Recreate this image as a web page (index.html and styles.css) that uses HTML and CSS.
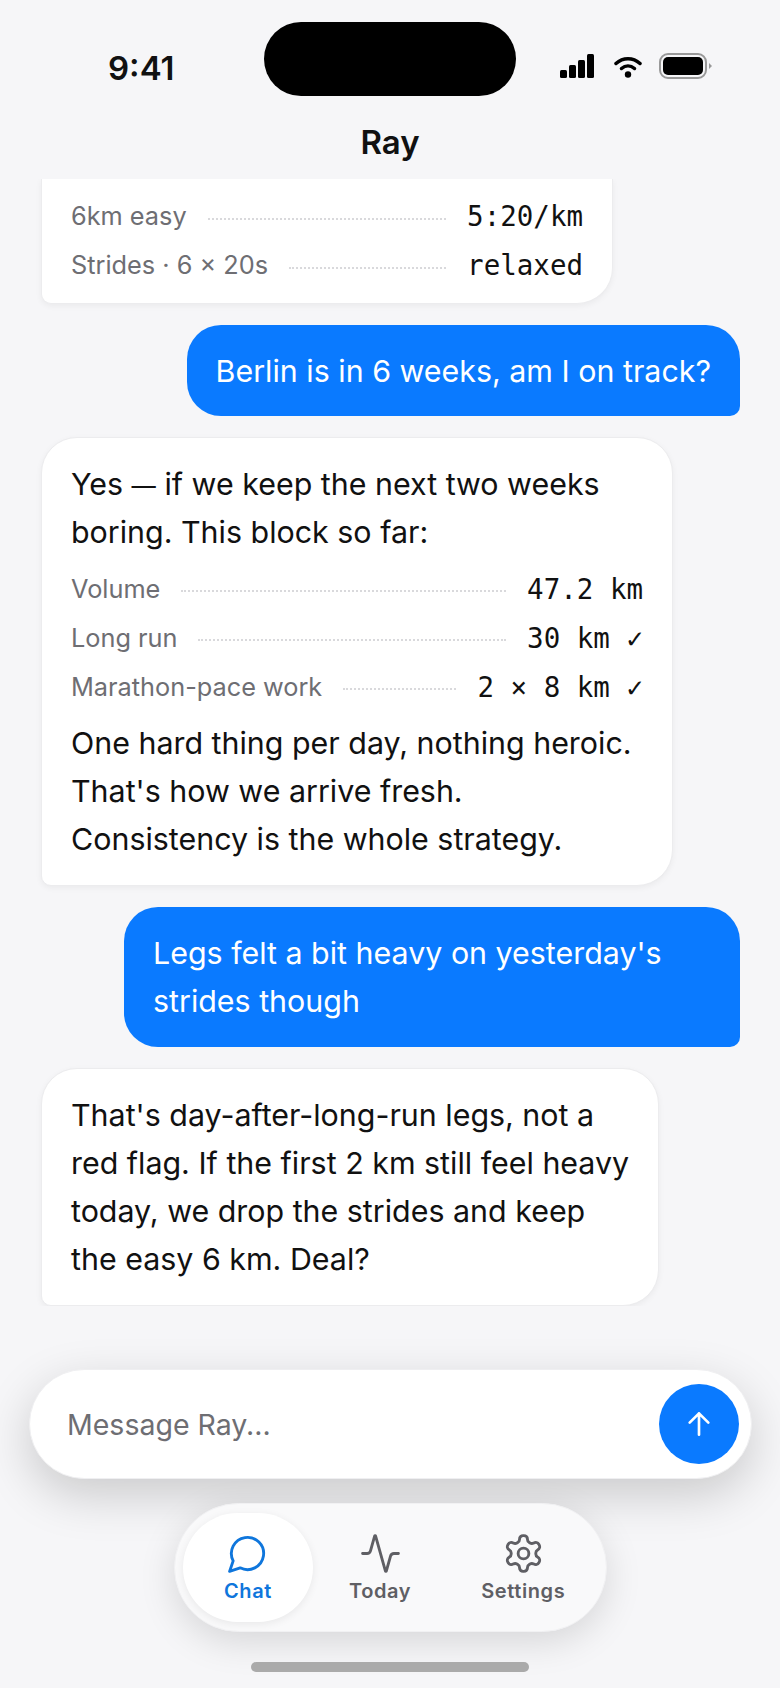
FILE: index.html
```html
<!DOCTYPE html>
<html lang="en">
<head>
  <meta charset="UTF-8" />
  <title>Ray</title>
  <link rel="stylesheet" href="styles.css">
</head>
<body>

<div class="phone">
  <div class="island"></div>

  <div class="status">
    <span class="time">9:41</span>
    <div class="status-icons">
      <svg class="signal" width="36" height="24" viewBox="0 0 36 24">
        <rect x="1" y="16" width="7" height="8" rx="1.5"/>
        <rect x="10" y="11" width="7" height="13" rx="1.5"/>
        <rect x="19" y="6" width="7" height="18" rx="1.5"/>
        <rect x="28" y="0" width="7" height="24" rx="1.5"/>
      </svg>
      <svg class="wifi" width="28" height="23" viewBox="0 0 28 23">
        <path d="M2 8.5C9 2 19 2 26 8.5" />
        <path d="M7.5 13.5C11.5 10 16.500 10 20.500 13.500" />
        <circle cx="14" cy="19.500" r="3.200" />
      </svg>
      <svg class="battery" width="54" height="26" viewBox="0 0 54 26">
        <rect class="battery-rim" x="1" y="1" width="46" height="24" rx="8"/>
        <rect x="4" y="4" width="40" height="18" rx="5"/>
        <path class="battery-cap" d="M50 10l3 3-3 3z"/>
      </svg>
    </div>
  </div>

  <header class="title">Ray</header>

  <main class="messages">
    <div class="bubble ray ray-plan">
      <div class="row"><span class="label">6km easy</span><span class="dots"></span><span class="value">5:20/km</span></div>
      <div class="row"><span class="label">Strides · 6 × 20s</span><span class="dots"></span><span class="value">relaxed</span></div>
    </div>

    <div class="bubble me">Berlin is in 6 weeks, am I on track?</div>

    <div class="bubble ray ray-block">
      <p>Yes <span class="dash">—</span> if we keep the next two weeks<br>boring. This block so far:</p>
      <div class="rows">
        <div class="row"><span class="label">Volume</span><span class="dots"></span><span class="value">47.2 km</span></div>
        <div class="row"><span class="label">Long run</span><span class="dots"></span><span class="value">30 km ✓</span></div>
        <div class="row"><span class="label">Marathon-pace work</span><span class="dots"></span><span class="value">2 × 8 km ✓</span></div>
      </div>
      <p>One hard thing per day, nothing heroic.<br>That's how we arrive fresh.<br>Consistency is the whole strategy.</p>
    </div>

    <div class="bubble me me-wide">Legs felt a bit heavy on yesterday's<br>strides though</div>

    <div class="bubble ray">
      <p>That's day-after-long-run legs, not a<br>red flag. If the first 2 km still feel heavy<br>today, we drop the strides and keep<br>the easy 6 km. Deal?</p>
    </div>
  </main>

  <div class="composer">
    <span class="placeholder">Message Ray...</span>
    <button class="send">
      <svg width="32" height="32" viewBox="0 0 24 24"><path d="M12 20V4M5 11l7-7 7 7"/></svg>
    </button>
  </div>

  <nav class="tabs">
    <a class="tab active">
      <svg width="43" height="43" viewBox="0 0 24 24"><path d="M7.900 20A9 9 0 1 0 4 16.100L2 22Z"/></svg>
      <span>Chat</span>
    </a>
    <a class="tab">
      <svg width="43" height="43" viewBox="0 0 24 24"><path d="M22 12h-2.480a2 2 0 0 0-1.930 1.460l-2.350 8.360a.25.25 0 0 1-.48 0L9.240 2.180a.25.25 0 0 0-.48 0l-2.350 8.360A2 2 0 0 1 4.490 12H2"/></svg>
      <span>Today</span>
    </a>
    <a class="tab">
      <svg width="43" height="43" viewBox="0 0 24 24"><path d="M12.220 2h-.44a2 2 0 0 0-2 2v.18a2 2 0 0 1-1 1.730l-.43.25a2 2 0 0 1-2 0l-.15-.08a2 2 0 0 0-2.730.73l-.22.38a2 2 0 0 0 .73 2.730l.15.1a2 2 0 0 1 1 1.720v.51a2 2 0 0 1-1 1.740l-.15.09a2 2 0 0 0-.73 2.730l.22.38a2 2 0 0 0 2.730.73l.15-.08a2 2 0 0 1 2 0l.43.25a2 2 0 0 1 1 1.730V20a2 2 0 0 0 2 2h.44a2 2 0 0 0 2-2v-.18a2 2 0 0 1 1-1.730l.43-.25a2 2 0 0 1 2 0l.15.08a2 2 0 0 0 2.730-.73l.22-.39a2 2 0 0 0-.73-2.730l-.15-.08a2 2 0 0 1-1-1.740v-.5a2 2 0 0 1 1-1.740l.15-.09a2 2 0 0 0 .73-2.730l-.22-.38a2 2 0 0 0-2.730-.73l-.15.08a2 2 0 0 1-2 0l-.43-.25a2 2 0 0 1-1-1.730V4a2 2 0 0 0-2-2z"/><circle cx="12" cy="12" r="3"/></svg>
      <span>Settings</span>
    </a>
  </nav>

  <div class="home-bar"></div>
</div>

</body>
</html>
```

FILE: styles.css
```css
body {
  margin: 0;
  font-family: Inter, "Noto Sans", sans-serif;
  background: #f5f5f7;
  color: #111;
}

.phone {
  position: relative;
  width: 780px;
  height: 1688px;
  display: flex;
  flex-direction: column;
  overflow: hidden;
  background: #f6f6f8;
}

.island {
  position: absolute;
  left: 264px;
  top: 22px;
  width: 252px;
  height: 74px;
  border-radius: 37px;
  background: #000;
}

.status {
  display: flex;
  justify-content: space-between;
  align-items: center;
  padding: 30px 67px 0 108px;
  box-sizing: border-box;
  height: 106px;
}

.time {
  font-size: 33px;
  font-weight: 600;
}

.status-icons {
  display: flex;
  align-items: center;
  gap: 17px;
  margin-bottom: 4px;
}

.signal {
  fill: #000;
  margin-right: 2px;
}

.wifi {
  fill: #000;
}

.wifi path {
  fill: none;
  stroke: #000;
  stroke-width: 3.5;
  stroke-linecap: round;
}

.battery {
  fill: #000;
}

.battery-rim {
  fill: none;
  stroke: #999;
  stroke-width: 2;
}

.battery-cap {
  fill: #999;
}

.title {
  height: 73px;
  padding-top: 16px;
  box-sizing: border-box;
  text-align: center;
  font-size: 33px;
  font-weight: 600;
}

.messages {
  height: 1127px;
  padding: 0 40px 0 41px;
  box-sizing: border-box;
  display: flex;
  flex-direction: column;
  justify-content: flex-end;
  gap: 21px;
  overflow: hidden;
}

.bubble {
  width: fit-content;
  box-sizing: border-box;
  font-size: 30.4px;
  line-height: 48px;
  padding: 22px 29px;
}

.bubble p {
  margin: 0;
}

.dash {
  font-size: 0.8em;
  line-height: 1;
}

.ray {
  background: #fff;
  border: 1px solid #ececee;
  border-radius: 36px 36px 36px 10px;
  box-shadow: 0 2px 6px rgba(0,0,0,0.05);
}

.ray-plan {
  width: 572px;
  border-radius: 0 0 36px 10px;
  border-top: none;
  padding-top: 13px;
  padding-bottom: 13px;
}

.ray-block {
  width: 632px;
}

.me {
  align-self: flex-end;
  background: #0a7aff;
  color: #fff;
  padding-top: 21.8px;
  padding-bottom: 21.8px;
  border-radius: 34px 34px 10px 34px;
}

.me-wide {
  width: 616px;
}

.rows {
  margin: 8px 0;
}

.row {
  display: flex;
  align-items: center;
  gap: 21px;
  height: 49px;
}

.label {
  font-size: 25.3px;
  color: #6e6e73;
  white-space: nowrap;
}

.dots {
  flex: 1;
  border-top: 2px dotted #d9d9dc;
  margin-top: 5px;
}

.value {
  font-family: "DejaVu Sans Mono", monospace;
  font-size: 27.5px;
  white-space: nowrap;
}

.composer {
  position: absolute;
  left: 29px;
  top: 1369px;
  width: 723px;
  height: 110px;
  box-sizing: border-box;
  display: flex;
  align-items: center;
  justify-content: space-between;
  padding: 0 12px 0 37px;
  background: #fff;
  border: 1px solid #efeff1;
  border-radius: 55px;
  box-shadow: 0 16px 48px rgba(0,0,0,0.18);
}

.placeholder {
  font-size: 28.500px;
  color: #6e6e73;
}

.send {
  width: 80px;
  height: 80px;
  padding: 0;
  border: none;
  border-radius: 50%;
  background: #0a7aff;
  display: flex;
  align-items: center;
  justify-content: center;
}

.send svg {
  fill: none;
  stroke: #fff;
  stroke-width: 2;
  stroke-linecap: round;
  stroke-linejoin: round;
}

.tabs {
  position: absolute;
  left: 174px;
  top: 1503px;
  width: 433px;
  height: 129px;
  box-sizing: border-box;
  display: flex;
  padding: 9px 5px 9px 8px;
  background: #f9f9fa;
  border: 1px solid #f1f1f3;
  border-radius: 65px;
  box-shadow: 0 10px 36px rgba(0,0,0,0.13);
}

.tab {
  display: flex;
  flex-direction: column;
  align-items: center;
  justify-content: center;
  gap: 4px;
  padding: 0 35px;
  font-size: 20px;
  font-weight: 600;
  letter-spacing: 0.6px;
  color: #5f5f64;
}

.tab svg {
  fill: none;
  stroke: currentColor;
  stroke-width: 1.600;
  stroke-linecap: round;
  stroke-linejoin: round;
}

.tab.active {
  padding: 0 41px;
  margin-right: 1px;
  background: #fff;
  border-radius: 55px;
  color: #0f76dc;
  box-shadow: 0 2px 8px rgba(0,0,0,0.07);
}

.home-bar {
  position: absolute;
  left: 251px;
  top: 1662px;
  width: 278px;
  height: 10px;
  border-radius: 5px;
  background: #aaa;
}
```
